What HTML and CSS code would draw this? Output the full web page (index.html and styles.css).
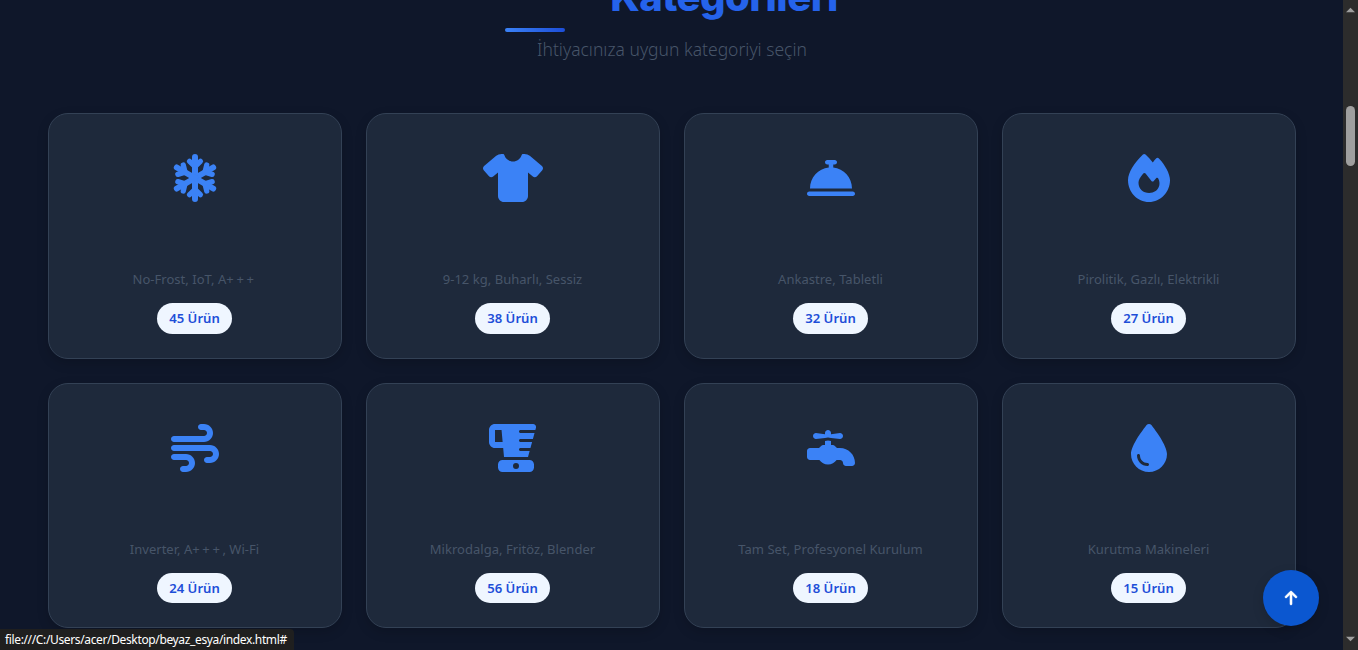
FILE: index.html
```
<!DOCTYPE html>
<html lang="tr">
<head>
<meta charset="utf-8">
<title>Kategoriler</title>
<link rel="stylesheet" href="styles.css">
</head>
<body>
<div class="viewport">
  <main class="page">
    <header class="heading">
      <h2 class="title">Kategorileri</h2>
      <div class="underline"></div>
      <p class="subtitle">İhtiyacınıza uygun kategoriyi seçin</p>
    </header>
    <section class="grid">
      <article class="card">
        <svg class="icon" viewBox="0 0 448 512"><defs><g id="arm"><path d="M224 256V32" stroke-width="64"/><path d="M166 78l58 56 58-56" stroke-width="56"/></g></defs><g fill="none" stroke="currentColor" stroke-linecap="round" stroke-linejoin="round"><use href="#arm"/><use href="#arm" transform="rotate(60 224 256)"/><use href="#arm" transform="rotate(120 224 256)"/><use href="#arm" transform="rotate(180 224 256)"/><use href="#arm" transform="rotate(240 224 256)"/><use href="#arm" transform="rotate(300 224 256)"/></g></svg>
        <p class="desc">No-Frost, IoT, A<span class="plus">+++</span></p><span class="badge">45 Ürün</span>
      </article>
      <article class="card">
        <svg class="icon" viewBox="0 0 640 512"><path d="M211.8 0c7.8 0 14.3 5.7 16.7 13.2C240.8 51.9 277.1 80 320 80s79.2-28.1 91.5-66.8C413.9 5.7 420.4 0 428.2 0h12.6c22.5 0 44.2 7.9 61.5 22.3L628.5 127.4c6.6 5.5 10.7 13.5 11.4 22.1s-2.1 17.1-7.8 23.6l-56 64c-11.4 13.1-31.2 14.6-44.6 3.5L480 197.7V448c0 35.3-28.7 64-64 64H224c-35.3 0-64-28.7-64-64V197.7l-51.5 42.9c-13.3 11.1-33.1 9.6-44.6-3.5l-56-64c-5.7-6.5-8.5-15-7.8-23.6s4.8-16.6 11.4-22.1L137.7 22.3C155 7.9 176.7 0 199.2 0h12.6z"/></svg>
        <p class="desc">9-12 kg, Buharlı, Sessiz</p><span class="badge">38 Ürün</span>
      </article>
      <article class="card">
        <svg class="icon" viewBox="0 0 512 512"><path d="M216 64c-13.3 0-24 10.7-24 24s10.7 24 24 24h16v33.3C119.6 157.2 32 252.4 32 368H480c0-115.6-87.6-210.8-200-222.7V112h16c13.3 0 24-10.7 24-24s-10.7-24-24-24H216zM24 400c-13.3 0-24 10.7-24 24s10.7 24 24 24H488c13.3 0 24-10.7 24-24s-10.7-24-24-24H24z"/></svg>
        <p class="desc">Ankastre, Tabletli</p><span class="badge">32 Ürün</span>
      </article>
      <article class="card">
        <svg class="icon" viewBox="0 0 448 512"><path d="M159.3 5.4c7.8-7.3 19.9-7.2 27.7 .1c27.6 25.9 53.5 53.8 77.7 84c11-14.4 23.5-30.1 37-42.9c7.9-7.4 20.1-7.4 28 .1c34.6 33 63.9 76.6 84.5 118c20.3 40.8 33.8 82.5 33.8 111.9C448 404.2 348.2 512 224 512C98.4 512 0 404.1 0 276.5c0-38.4 17.8-85.3 45.4-131.7C73.3 97.7 112.7 48.6 159.3 5.4zM225.7 416c25.3 0 47.7-7 68.8-21c42.1-29.4 53.4-88.2 28.1-134.4c-4.5-9-16-9.6-22.5-2l-25.2 29.3c-6.6 7.6-18.5 7.4-24.7-.5c-16.5-21-46-58.5-62.8-79.8c-6.3-8-18.3-8.1-24.7-.1c-33.8 42.5-50.8 69.3-50.8 99.4C112 375.4 162.6 416 225.7 416z"/></svg>
        <p class="desc">Pirolitik, Gazlı, Elektrikli</p><span class="badge">27 Ürün</span>
      </article>
      <article class="card">
        <svg class="icon" viewBox="0 0 512 512"><path d="M288 32c0 17.7 14.3 32 32 32h32c17.7 0 32 14.3 32 32s-14.3 32-32 32H32c-17.7 0-32 14.3-32 32s14.3 32 32 32H352c53 0 96-43 96-96s-43-96-96-96H320c-17.7 0-32 14.3-32 32zm64 352c0 17.7 14.3 32 32 32h32c53 0 96-43 96-96s-43-96-96-96H32c-17.7 0-32 14.3-32 32s14.3 32 32 32H416c17.7 0 32 14.3 32 32s-14.3 32-32 32H384c-17.7 0-32 14.3-32 32zM128 512h32c53 0 96-43 96-96s-43-96-96-96H32c-17.7 0-32 14.3-32 32s14.3 32 32 32H160c17.7 0 32 14.3 32 32s-14.3 32-32 32H128c-17.7 0-32 14.3-32 32s14.3 32 32 32z"/></svg>
        <p class="desc">Inverter, A<span class="plus">+++</span>, Wi-Fi</p><span class="badge">24 Ürün</span>
      </article>
      <article class="card">
        <svg class="icon" viewBox="0 0 512 512"><path d="M0 64C0 28.7 28.7 0 64 0H470.1c21.1 0 36.4 20.1 30.9 40.4L494.5 64H336c-8.8 0-16 7.2-16 16s7.2 16 16 16H485.8l-17.5 64H336c-8.8 0-16 7.2-16 16s7.2 16 16 16H459.6l-17.5 64H336c-8.8 0-16 7.2-16 16s7.2 16 16 16h97.5L416 352H160l-8.7-96H64c-35.3 0-64-28.7-64-64V64zM145.5 192L133.8 64H64V192h81.5zM144 384H432c26.5 0 48 21.5 48 48v32c0 26.5-21.5 48-48 48H144c-26.5 0-48-21.5-48-48V432c0-26.5 21.5-48 48-48zm144 96a32 32 0 1 0 0-64 32 32 0 1 0 0 64z"/></svg>
        <p class="desc">Mikrodalga, Fritöz, Blender</p><span class="badge">56 Ürün</span>
      </article>
      <article class="card">
        <svg class="icon" viewBox="0 0 512 512"><path d="M192 96v12L96 96c-17.7 0-32 14.3-32 32s14.3 32 32 32l96-12 31-3.9 1-.1 1 .1 31 3.9 96 12c17.7 0 32-14.3 32-32s-14.3-32-32-32l-96 12V96c0-17.7-14.3-32-32-32s-32 14.3-32 32zM32 256c-17.7 0-32 14.3-32 32v64c0 17.7 14.3 32 32 32H132.1c20.2 29 53.9 48 91.9 48s71.7-19 91.9-48H352c17.7 0 32 14.3 32 32s14.3 32 32 32h64c17.7 0 32-14.3 32-32c0-88.4-71.6-160-160-160H320l-22.6-22.6c-6-6-14.1-9.4-22.6-9.4H256V180.2l-32-4-32 4V224H173.3c-8.5 0-16.6 3.4-22.6 9.4L128 256H32z"/></svg>
        <p class="desc">Tam Set, Profesyonel Kurulum</p><span class="badge">18 Ürün</span>
      </article>
      <article class="card">
        <svg class="icon" viewBox="0 0 384 512"><path d="M192 512C86 512 0 426 0 320C0 228.8 130.2 57.7 166.6 11.7C172.6 4.2 181.5 0 191.1 0h1.8c9.6 0 18.5 4.2 24.5 11.7C253.8 57.7 384 228.8 384 320c0 106-86 192-192 192zM96 336c0-8.8-7.2-16-16-16s-16 7.2-16 16c0 61.9 50.1 112 112 112c8.8 0 16-7.2 16-16s-7.2-16-16-16c-44.2 0-80-35.8-80-80z"/></svg>
        <p class="desc">Kurutma Makineleri</p><span class="badge">15 Ürün</span>
      </article>
    </section>
  </main>
  <aside class="scrollbar">
    <svg class="scroll-arrow" viewBox="0 0 10 6"><path d="M0 5.5L5 .5l5 5z"/></svg>
    <div class="thumb"></div>
    <svg class="scroll-arrow scroll-down" viewBox="0 0 10 6"><path d="M0 .5l5 5 5-5z"/></svg>
  </aside>
  <a class="to-top" href="#"><svg viewBox="0 0 384 512"><path stroke="#fff" stroke-width="18" d="M214.6 41.4c-12.5-12.5-32.8-12.5-45.3 0l-160 160c-12.5 12.5-12.5 32.8 0 45.3s32.8 12.5 45.3 0L160 141.2V448c0 17.7 14.3 32 32 32s32-14.3 32-32V141.2L329.4 246.6c12.5 12.5 32.8 12.5 45.3 0s12.5-32.8 0-45.3l-160-160z"/></svg></a>
  <div class="status">file:///C:/Users/acer/Desktop/beyaz_esya/index.html#</div>
</div>
</body>
</html>
```
FILE: styles.css
```
* { box-sizing: border-box; margin: 0; padding: 0; }
body { background: #0f172a; font-family: "Noto Sans", sans-serif; overflow: hidden; }
.viewport { position: relative; display: flex; height: 650px; overflow: hidden; }
.page { flex: 1; padding: 0 47px 0 48px; background: #0f172a; }
.heading { height: 113px; display: flex; flex-direction: column; align-items: center; }
.title { margin: -28px 0 0 104px; height: 56px; line-height: 50px; font-family: Inter, sans-serif; font-size: 40px; font-weight: 800; letter-spacing: -.55px; color: #2563eb; white-space: nowrap; }
.underline { width: 60px; height: 4px; margin-right: 274px; border-radius: 2px; background: linear-gradient(90deg, #3b82f6, #1d4ed8); }
.subtitle { margin-top: 3px; line-height: 28px; font-size: 17.5px; font-weight: 300; color: #475569; white-space: nowrap; }
.grid { display: grid; grid-template-columns: repeat(4, 294px); gap: 24px; }
.card { height: 245.6px; display: flex; flex-direction: column; align-items: center; padding: 40px 24px 0; border: 1px solid #334155; border-radius: 20px; background: #1e293b; box-shadow: 0 4px 12px rgba(0, 0, 0, .16); }
.icon { height: 48px; margin-left: -1px; overflow: visible; color: #3b82f6; fill: currentColor; }
.desc { margin: 66px 1px 0 0; line-height: 22px; font-size: 13px; letter-spacing: .03px; color: #475569; white-space: nowrap; }
.plus { letter-spacing: 2.6px; }
.badge { margin: 13px 1px 0 0; height: 30.6px; padding: 0 12px; border-radius: 16px; background: #eff6ff; color: #1d4ed8; font-size: 13.1px; font-weight: 600; line-height: 30px; white-space: nowrap; }
.scrollbar { width: 15px; display: flex; flex-direction: column; align-items: center; padding: 7px 0 8px; background: #2c2c2c; }
.scroll-arrow { width: 9px; height: 6px; fill: #9f9f9f; }
.thumb { width: 9px; height: 60px; margin-top: 93px; border-radius: 5px; background: #9f9f9f; }
.scroll-down { margin-top: auto; }
.to-top { position: absolute; left: 1263px; top: 570px; width: 56px; height: 56px; display: flex; align-items: center; justify-content: center; border-radius: 50%; background: #0b57d0; box-shadow: 0 4px 12px rgba(0, 0, 0, .15); }
.to-top svg { height: 16px; fill: #fff; overflow: visible; }
.status { position: absolute; left: 0; bottom: 0; width: 294px; height: 21px; padding-left: 5px; border-radius: 0 4px 0 0; background: #1f1f1f; color: #fff; font-size: 12px; line-height: 21px; letter-spacing: -.36px; white-space: nowrap; }
```
